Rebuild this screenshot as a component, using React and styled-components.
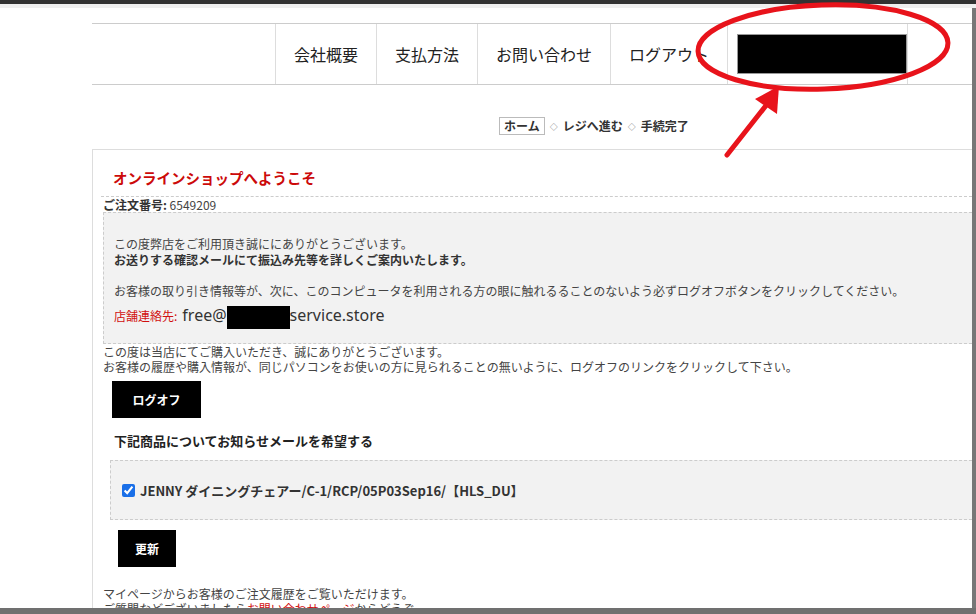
import React from 'react'
import styled, { createGlobalStyle } from 'styled-components'

const GlobalStyle = createGlobalStyle`
    html, body {
        margin: 0;
        padding: 0;
        background: #fff;
        overflow: hidden;
    }
    body {
        font-family: "Noto Sans CJK JP", "Noto Sans", sans-serif;
        color: #444;
    }
`

const navItems = ['会社概要', '支払方法', 'お問い合わせ', 'ログアウト']

export default function App()
{
    return (
        <Screen>
            <GlobalStyle />
            <TopChrome />
            <Viewport>
                <Page>
                    <Nav>
                        {navItems.map(item => <NavItem key={item}>{item}</NavItem>)}
                        <NavItem $last>
                            <Redacted $w={170} $h={40} $bordered />
                        </NavItem>
                    </Nav>

                    <Breadcrumb>
                        <Crumb $boxed>ホーム</Crumb>
                        <Sep>◇</Sep>
                        <Crumb>レジへ進む</Crumb>
                        <Sep>◇</Sep>
                        <Crumb>手続完了</Crumb>
                    </Breadcrumb>

                    <MainBox>
                        <Title>オンラインショップへようこそ</Title>
                        <OrderRow><b>ご注文番号:</b> 6549209</OrderRow>

                        <Notice>
                            <p>この度弊店をご利用頂き誠ににありがとうございます。<br />
                            <b>お送りする確認メールにて振込み先等を詳しくご案内いたします。</b></p>
                            <p>お客様の取り引き情報等が、次に、このコンピュータを利用される方の眼に触れるることのないよう必ずログオフボタンをクリックしてください。</p>
                            <Contact>
                                <span className='label'>店舗連絡先:</span>
                                <span className='mail'>free@<Redacted $w={63} $h={23} />service.store</span>
                            </Contact>
                        </Notice>

                        <Plain>
                            この度は当店にてご購入いただき、誠にありがとうございます。<br />
                            お客様の履歴や購入情報が、同じパソコンをお使いの方に見られることの無いように、ログオフのリンクをクリックして下さい。
                        </Plain>

                        <BlackButton $ml={9} $mt={7} $w={89}>ログオフ</BlackButton>

                        <Heading>下記商品についてお知らせメールを希望する</Heading>

                        <ProductBox>
                            <label>
                                <input type='checkbox' defaultChecked />
                                <span>JENNY ダイニングチェアー/C-1/RCP/05P03Sep16/【HLS_DU】</span>
                            </label>
                        </ProductBox>

                        <BlackButton $ml={15} $mt={10} $w={58}>更新</BlackButton>

                        <Footer>
                            マイページからお客様のご注文履歴をご覧いただけます。<br />
                            ご質問などございましたら<a href='#'>お問い合わせページ</a>からどうぞ。
                        </Footer>
                    </MainBox>
                </Page>
            </Viewport>

            <Annotation width='976' height='614' viewBox='0 0 976 614'>
                <ellipse cx='823' cy='47' rx='125' ry='42' fill='none' stroke='#e8131b' strokeWidth='5'
                    transform='rotate(-2 823 47)' />
                <line x1='727' y1='155' x2='768' y2='103' stroke='#e8131b' strokeWidth='5' strokeLinecap='round' />
                <polygon points='779,86 755,99 777,114' fill='#e8131b' />
            </Annotation>
            <BottomBar />
        </Screen>
    )
}

const Screen = styled.div`
    position: relative;
    width: 976px;
    height: 614px;
    overflow: hidden;
`

const TopChrome = styled.div`
    height: 4px;
    background: #323232;
    border-bottom: 4px solid #efefef;
`

const Viewport = styled.div`
    height: 606px;
    border-right: 4px solid #777;
    box-sizing: border-box;
    overflow: hidden;
`

const Page = styled.div`
    padding: 15px 0 0 92px;
`

const Nav = styled.nav`
    display: flex;
    justify-content: flex-end;
    height: 60px;
    padding-right: 64px;
    border-top: 1px solid #ccc;
    border-bottom: 1px solid #ccc;
`

const NavItem = styled.div`
    display: flex;
    align-items: center;
    padding: ${p => p.$last ? '0 0 0 9px' : '0 18px'};
    border-left: 1px solid #ddd;
    border-right: ${p => p.$last ? '1px solid #ddd' : 'none'};
    font-size: 16px;
    color: #222;
`

const Redacted = styled.span`
    display: inline-block;
    width: ${p => p.$w}px;
    height: ${p => p.$h}px;
    background: #000;
    border: ${p => p.$bordered ? '1px solid #999' : 'none'};
    box-sizing: border-box;
    vertical-align: middle;
`

const Breadcrumb = styled.div`
    display: flex;
    align-items: center;
    gap: 5px;
    height: 46px;
    padding: 18px 0 0 407px;
    font-size: 12px;
    font-weight: bold;
    color: #333;
`

const Crumb = styled.span`
    padding: ${p => p.$boxed ? '0 4px' : '0'};
    border: ${p => p.$boxed ? '1px solid #bbb' : 'none'};
    line-height: 16px;
`

const Sep = styled.span`
    font-size: 8px;
    color: #888;
`

const MainBox = styled.div`
    border: 1px solid #ddd;
    border-right: none;
    padding: 0 0 40px 10px;
`

const Title = styled.h1`
    margin: 0;
    padding: 18px 0 8px 10px;
    font-size: 14.5px;
    line-height: 20px;
    color: #cc0a0a;
    font-weight: bold;
`

const OrderRow = styled.div`
    margin-left: -2px;
    padding-left: 2px;
    border-top: 1px dashed #ccc;
    font-size: 12px;
    line-height: 15px;
    color: #444;

    b { color: #333; }
`

const Notice = styled.div`
    padding: 23px 0 15px 10px;
    background: #f2f2f2;
    border: 1px dashed #ccc;
    border-right: none;
    font-size: 12px;
    line-height: 16px;
    color: #444;

    p {
        margin: 0 0 15px;
    }

    p:last-of-type {
        margin-bottom: 5px;
    }

    b { color: #333; }
`

const Contact = styled.div`
    display: flex;
    align-items: center;
    gap: 5px;
    height: 24px;

    .label {
        color: #d10f0f;
        font-size: 12px;
    }

    .mail {
        font-family: "Noto Sans", sans-serif;
        font-size: 16px;
        color: #333;
        line-height: 24px;
    }
`

const Plain = styled.div`
    margin-top: 0;
    font-size: 12px;
    line-height: 15px;
    color: #444;
`

const BlackButton = styled.button`
    display: block;
    margin: ${p => p.$mt}px 0 0 ${p => p.$ml}px;
    width: ${p => p.$w}px;
    height: 37px;
    border: none;
    background: #000;
    color: #fff;
    font-family: "Noto Sans CJK JP", sans-serif;
    font-size: 12px;
    font-weight: bold;
`

const Heading = styled.h2`
    margin: 14px 0 0 11px;
    font-size: 13px;
    line-height: 17px;
    color: #222;
    font-weight: bold;
`

const ProductBox = styled.div`
    margin: 11px 0 0 7px;
    height: 60px;
    box-sizing: border-box;
    display: flex;
    align-items: center;
    padding-left: 11px;
    background: #f2f2f2;
    border: 1px dashed #ccc;
    border-right: none;

    label {
        display: flex;
        align-items: center;
        gap: 5px;
        font-size: 13px;
        font-weight: bold;
        color: #333;
    }

    input {
        margin: 0;
        width: 13px;
        height: 13px;
        accent-color: #1a6fe8;
    }
`

const Footer = styled.div`
    margin-top: 19px;
    font-size: 12px;
    line-height: 15px;
    color: #444;

    a {
        color: #d10f0f;
        text-decoration: none;
    }
`

const Annotation = styled.svg`
    position: absolute;
    left: 0;
    top: 0;
    pointer-events: none;
`

const BottomBar = styled.div`
    position: absolute;
    left: 0;
    right: 0;
    bottom: 0;
    height: 6px;
    background: #707070;
`
